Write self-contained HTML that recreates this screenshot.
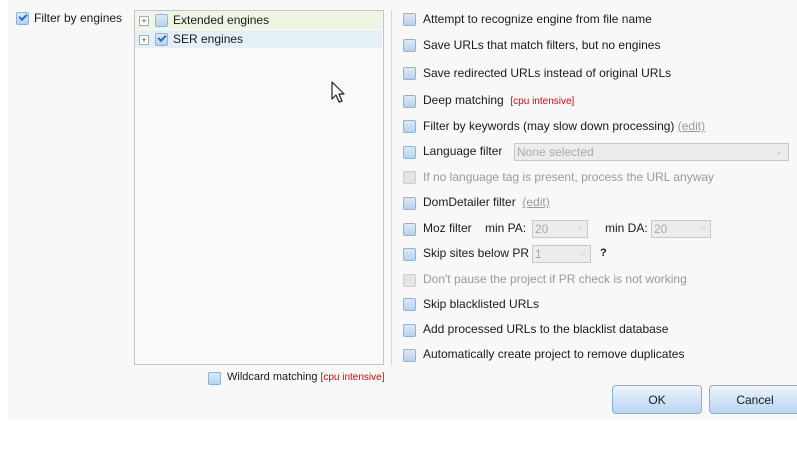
<!DOCTYPE html>
<html><head><style>
body{margin:0;width:797px;height:449px;background:#fff;position:relative;overflow:hidden;font-family:"Liberation Sans",Tahoma,sans-serif;font-size:12px;color:#1a1a1a}
.panel{position:absolute;left:8px;top:0;width:789px;height:421px;background:#f8f8f8}
.a{position:absolute;white-space:nowrap}
.cb{position:absolute;width:11px;height:11px;border:1px solid #8fb3d6;border-radius:2px;background:linear-gradient(#dbeaf8,#b7d2ee)}
.cb.d{border-color:#ccc;background:#e4e4e4}
.ck::after{content:"";position:absolute;left:2px;top:1px;width:6px;height:3px;border-left:2px solid #2d6fc0;border-bottom:2px solid #2d6fc0;transform:rotate(-45deg)}
.red{color:#e00000;font-size:10px}
.edit{color:#999;text-decoration:underline}
.g{color:#9a9a9a}
.inp{position:absolute;border:1px solid #c8c8c8;background:#ececec;color:#aaa;font-size:12px;line-height:16px;padding-left:2px;box-sizing:border-box;height:18px}
.sp{position:absolute;right:2px;top:3px;width:10px;height:10px;color:#bbb;font-size:8px;line-height:10px;text-align:center}
.btn{position:absolute;height:29px;border:1px solid #8aaed0;border-radius:4px;background:linear-gradient(#eef6fd,#cfe4f7 50%,#b9d7f3);text-align:center;line-height:28px;box-sizing:border-box}
.plus{position:absolute;width:8px;height:8px;border:1px solid #aaa;background:#fff;font-size:9px;line-height:8px;text-align:center;color:#555}
</style></head><body>
<div class="panel"></div>
<div class="cb ck" style="left:16px;top:12px"></div><div class="a" style="left:34px;top:11px">Filter by engines</div>
<div class="a" style="left:134px;top:10px;width:248px;height:353px;border:1px solid #c4c4c4;background:#f9f9f9"></div>
<div class="a" style="left:135px;top:11px;width:247px;height:18px;background:#eef6e2"></div>
<div class="a" style="left:135px;top:30px;width:247px;height:18px;background:#e3f0f8"></div>
<div class="plus" style="left:139px;top:16px">+</div><div class="cb" style="left:155px;top:14px"></div><div class="a" style="left:173px;top:13px">Extended engines</div>
<div class="plus" style="left:139px;top:35px">+</div><div class="cb ck" style="left:155px;top:33px"></div><div class="a" style="left:173px;top:32px">SER engines</div>
<svg class="a" style="left:331px;top:81px" width="16" height="24" viewBox="0 0 16 24"><path d="M1 1 L1 18 L5 14 L8 21 L11 20 L8 13 L13 13 Z" fill="#fff" stroke="#222" stroke-width="1.2" stroke-linejoin="round"/></svg>
<div class="cb" style="left:208px;top:372px"></div><div class="a" style="left:227px;top:371px;font-size:11px">Wildcard matching <span class="red">[cpu intensive]</span></div>
<div class="a" style="left:391px;top:10px;width:1px;height:355px;background:#d4d4d4"></div>

<div class="cb" style="left:403px;top:13px"></div><div class="a" style="left:423px;top:12px">Attempt to recognize engine from file name</div>
<div class="cb" style="left:403px;top:39px"></div><div class="a" style="left:423px;top:38px">Save URLs that match filters, but no engines</div>
<div class="cb" style="left:403px;top:67px"></div><div class="a" style="left:423px;top:66px">Save redirected URLs instead of original URLs</div>
<div class="cb" style="left:403px;top:95px"></div><div class="a" style="left:423px;top:93px">Deep matching &nbsp;<span class="red">[cpu intensive]</span></div>
<div class="cb" style="left:403px;top:120px"></div><div class="a" style="left:423px;top:119px">Filter by keywords (may slow down processing) <span class="edit">(edit)</span></div>
<div class="cb" style="left:403px;top:146px"></div><div class="a" style="left:423px;top:144px">Language filter</div>
<div class="inp" style="left:514px;top:143px;width:275px">None selected<div class="sp" style="width:14px">&#8964;</div></div>
<div class="cb d" style="left:403px;top:171px"></div><div class="a g" style="left:423px;top:170px">If no language tag is present, process the URL anyway</div>
<div class="cb" style="left:403px;top:197px"></div><div class="a" style="left:423px;top:195px">DomDetailer filter &nbsp;<span class="edit">(edit)</span></div>
<div class="cb" style="left:403px;top:223px"></div><div class="a" style="left:423px;top:221px">Moz filter &nbsp;&nbsp;&nbsp;min PA:</div>
<div class="inp" style="left:532px;top:220px;width:56px">20<div class="sp">&#9675;</div></div>
<div class="a" style="left:605px;top:221px">min DA:</div>
<div class="inp" style="left:651px;top:220px;width:60px">20<div class="sp">&#9675;</div></div>
<div class="cb" style="left:403px;top:248px"></div><div class="a" style="left:423px;top:246px">Skip sites below PR</div>
<div class="inp" style="left:532px;top:245px;width:59px">1<div class="sp">&#9675;</div></div>
<div class="a" style="left:600px;top:247px;font-weight:bold;font-size:11px">?</div>
<div class="cb d" style="left:403px;top:274px"></div><div class="a g" style="left:423px;top:272px">Don't pause the project if PR check is not working</div>
<div class="cb" style="left:403px;top:298px"></div><div class="a" style="left:423px;top:297px">Skip blacklisted URLs</div>
<div class="cb" style="left:403px;top:324px"></div><div class="a" style="left:423px;top:322px">Add processed URLs to the blacklist database</div>
<div class="cb" style="left:403px;top:349px"></div><div class="a" style="left:423px;top:347px">Automatically create project to remove duplicates</div>
<div class="btn" style="left:612px;top:385px;width:90px">OK</div>
<div class="btn" style="left:709px;top:385px;width:92px">Cancel</div>
</body></html>
